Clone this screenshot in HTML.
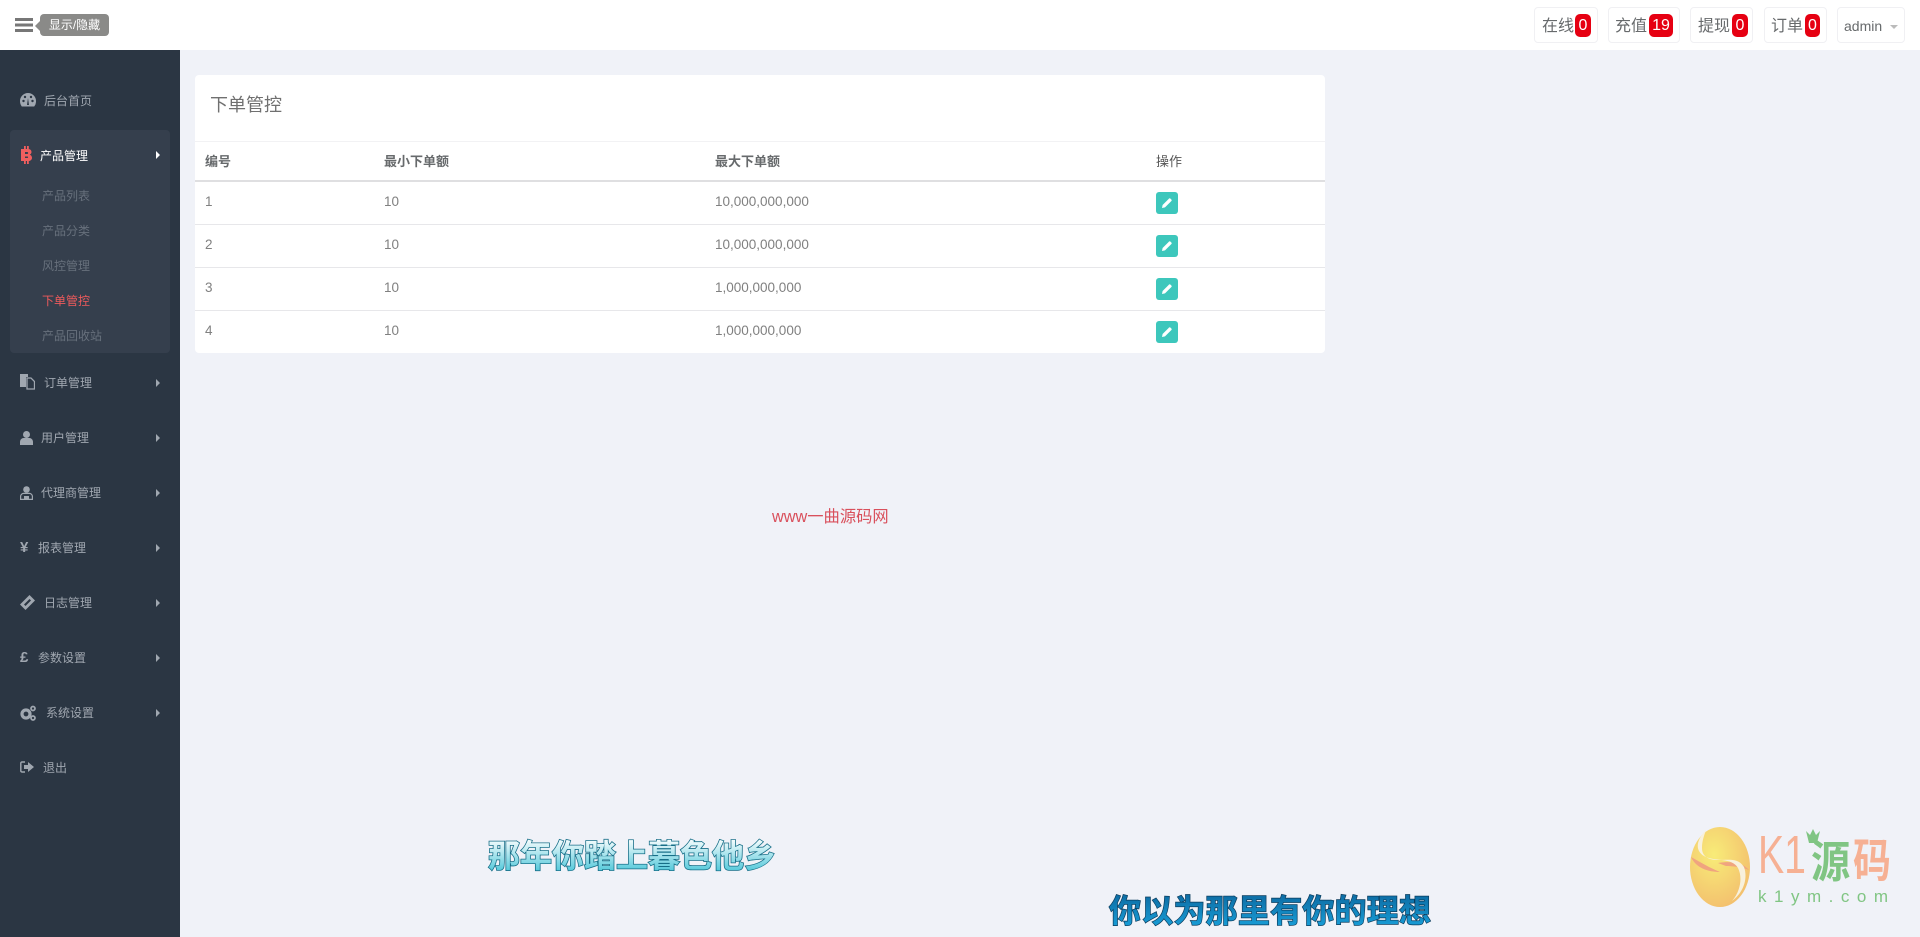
<!DOCTYPE html>
<html lang="zh">
<head>
<meta charset="utf-8">
<title>下单管控</title>
<style>
html,body{margin:0;padding:0;width:1920px;height:937px;overflow:hidden;background:#f0f2f8;font-family:"Liberation Sans","Noto Sans CJK SC",sans-serif;color:#676a6c}
*{box-sizing:border-box}
.a{position:absolute;white-space:nowrap}
#top{position:absolute;left:0;top:0;width:1920px;height:50px;background:#fff}
#side{position:absolute;left:0;top:50px;width:180px;height:887px;background:#2b3643}
#sub{position:absolute;left:10px;top:130px;width:160px;height:223px;background:#353f4d;border-radius:4px}
.m{font-size:12px;line-height:16px;color:#a0a7b0}
.s{font-size:12px;line-height:16px;color:#67707c;left:42px}
.ar{position:absolute;left:156px;width:0;height:0;border-left:4px solid #a0a7b0;border-top:4px solid transparent;border-bottom:4px solid transparent}
.box{position:absolute;top:7px;height:36px;background:#fff;border:1px solid #f0f0f3;border-radius:4px;font-size:16px;line-height:36px;color:#676a6c;white-space:nowrap}
.bd{position:absolute;top:6px;height:23px;background:#e60012;color:#fff;border-radius:5px;font-size:16px;line-height:23px;text-align:center}
.lb{position:absolute;left:6px;top:1px}
#card{position:absolute;left:195px;top:75px;width:1130px;height:278px;background:#fff;border-radius:4px}
.ln{position:absolute;left:0;width:1130px;height:1px;background:#e7e7ea}
.th{font-size:13px;font-weight:bold;line-height:16px;color:#676a6c}
.td{font-size:13.5px;line-height:16px;color:#808080}
.btn{position:absolute;left:961px;width:22px;height:22px;background:#3dc7bc;border-radius:3px}
.btn svg{position:absolute;left:5px;top:5px}
</style>
</head>
<body>
<div id="top">
<svg class="a" style="left:15px;top:18px" width="18" height="14" viewBox="0 0 18 14"><path d="M0 0h18v3H0zM0 5.500h18v3H0zM0 11h18v3H0z" fill="#777"/></svg>
<div class="a" style="left:35px;top:21px;width:0;height:0;border-right:5px solid #8a8a88;border-top:5px solid transparent;border-bottom:5px solid transparent"></div>
<div class="a" style="left:40px;top:14px;width:69px;height:22px;background:#8a8a88;border-radius:4px;color:#fff;font-size:12px;line-height:23px;text-align:center">显示/隐藏</div>
<div class="box" style="left:1534px;width:64px"><span class="lb" style="left:7px">在线</span><span class="bd" style="left:40px;width:16px">0</span></div>
<div class="box" style="left:1608px;width:72px"><span class="lb">充值</span><span class="bd" style="left:40px;width:24px">19</span></div>
<div class="box" style="left:1690px;width:63px"><span class="lb" style="left:7px">提现</span><span class="bd" style="left:41px;width:16px">0</span></div>
<div class="box" style="left:1764px;width:63px"><span class="lb">订单</span><span class="bd" style="left:40px;width:15px">0</span></div>
<div class="box" style="left:1837px;width:68px;font-size:14px"><span class="lb" style="top:0">admin</span><span class="a" style="left:52px;top:17px;width:0;height:0;border-top:4px solid #bbb;border-left:4px solid transparent;border-right:4px solid transparent"></span></div>
</div>

<div id="side"></div>
<div id="sub"></div>

<svg class="a" style="left:20px;top:93px" width="16" height="14" viewBox="0 0 16 14"><path d="M8 0a8 8 0 0 0-8 8c0 2 .6 4 1.800 5.500h12.400A8 8 0 0 0 16 8a8 8 0 0 0-8-8z" fill="#a0a7b0"/><circle cx="3.500" cy="8" r="1.200" fill="#2b3643"/><circle cx="5" cy="4" r="1.200" fill="#2b3643"/><circle cx="11" cy="4" r="1.200" fill="#2b3643"/><circle cx="12.500" cy="8" r="1.200" fill="#2b3643"/><path d="M7 12l1-7 1 7z" fill="#2b3643"/></svg>
<div class="a m" style="left:44px;top:93px">后台首页</div>

<svg class="a" style="left:20px;top:146px" width="12" height="18" viewBox="0 0 12 18"><path d="M1 3h7c2.500 0 3.500 1.500 3.500 3 0 1.300-.7 2.300-1.800 2.700 1.400.4 2.300 1.500 2.300 3 0 2-1.500 3.300-3.800 3.300H1zM5 6v2h2.200a1 1 0 0 0 0-2zM5 10.500V12h2.700a.9.9 0 0 0 0-1.500z" fill="#ef5f5f" fill-rule="evenodd"/><path d="M4 0h1.800v3H4zM7 0h1.800v3H7zM4 15h1.800v3H4zM7 15h1.800v3H7z" fill="#ef5f5f"/></svg>
<div class="a m" style="left:40px;top:148px;color:#fff">产品管理</div>
<div class="ar" style="top:151px;border-left-color:#fff"></div>

<div class="a s" style="top:188px">产品列表</div>
<div class="a s" style="top:223px">产品分类</div>
<div class="a s" style="top:258px">风控管理</div>
<div class="a s" style="top:293px;color:#ee5a5c">下单管控</div>
<div class="a s" style="top:328px">产品回收站</div>

<svg class="a" style="left:20px;top:374px" width="15" height="16" viewBox="0 0 15 16"><path d="M0 0h8v3H6v10H0z" fill="#a0a7b0"/><path d="M7 4h4l3.500 3.500V15H7z" fill="none" stroke="#a0a7b0" stroke-width="1.300"/></svg>
<div class="a m" style="left:44px;top:375px">订单管理</div>
<div class="ar" style="top:379px"></div>

<svg class="a" style="left:20px;top:431px" width="13" height="14" viewBox="0 0 13 14"><circle cx="6.500" cy="3.500" r="3.500" fill="#a0a7b0"/><path d="M0 14v-3c0-2.500 2-4 3.500-4h6c1.500 0 3.500 1.500 3.500 4v3z" fill="#a0a7b0"/></svg>
<div class="a m" style="left:41px;top:430px">用户管理</div>
<div class="ar" style="top:434px"></div>

<svg class="a" style="left:20px;top:486px" width="13" height="14" viewBox="0 0 13 14"><circle cx="6.500" cy="3.500" r="3.300" fill="#a0a7b0"/><path d="M.6 13.400v-3c0-2 1.800-3 3-3h5.800c1.200 0 3 1 3 3v3z" fill="none" stroke="#a0a7b0" stroke-width="1.200"/><path d="M4 10h5v3H4z" fill="#a0a7b0"/></svg>
<div class="a m" style="left:41px;top:485px">代理商管理</div>
<div class="ar" style="top:489px"></div>

<div class="a" style="left:20px;top:539px;font-size:15px;line-height:18px;font-weight:bold;color:#a0a7b0">¥</div>
<div class="a m" style="left:38px;top:540px">报表管理</div>
<div class="ar" style="top:544px"></div>

<svg class="a" style="left:20px;top:595px" width="15" height="15" viewBox="0 0 15 15"><path d="M0 9.500L9.500 0 15 5.500 5.500 15z" fill="#a0a7b0"/><path d="M4 9.500L9.500 4 11 5.500 5.500 11z" fill="#2b3643"/></svg>
<div class="a m" style="left:44px;top:595px">日志管理</div>
<div class="ar" style="top:599px"></div>

<div class="a" style="left:20px;top:649px;font-size:15px;line-height:18px;font-weight:bold;color:#a0a7b0">£</div>
<div class="a m" style="left:38px;top:650px">参数设置</div>
<div class="ar" style="top:654px"></div>

<svg class="a" style="left:20px;top:705px" width="16" height="16" viewBox="0 0 16 16"><circle cx="6" cy="9" r="4" fill="none" stroke="#a0a7b0" stroke-width="3.200"/><circle cx="13" cy="3.500" r="2" fill="none" stroke="#a0a7b0" stroke-width="1.700"/><circle cx="13" cy="13" r="2" fill="none" stroke="#a0a7b0" stroke-width="1.700"/></svg>
<div class="a m" style="left:46px;top:705px">系统设置</div>
<div class="ar" style="top:709px"></div>

<svg class="a" style="left:20px;top:761px" width="14" height="12" viewBox="0 0 14 12"><path d="M5 1H2a1.200 1.200 0 0 0-1.200 1.200v7.600A1.200 1.200 0 0 0 2 11h3" fill="none" stroke="#a0a7b0" stroke-width="1.400"/><path d="M4 4h4V1l6 5-6 5V8H4z" fill="#a0a7b0"/></svg>
<div class="a m" style="left:43px;top:760px">退出</div>

<div id="card">
<div class="a" style="left:15px;top:18px;font-size:18px;line-height:24px;color:#707070">下单管控</div>
<div class="ln" style="top:66px;background:#f2f2f4"></div>
<div class="ln" style="top:105px;height:2px;background:#dfdfe1"></div>
<div class="ln" style="top:149px"></div>
<div class="ln" style="top:192px"></div>
<div class="ln" style="top:235px"></div>

<div class="a th" style="left:10px;top:79px">编号</div>
<div class="a th" style="left:189px;top:79px">最小下单额</div>
<div class="a th" style="left:520px;top:79px">最大下单额</div>
<div class="a th" style="left:961px;top:79px;font-weight:normal;color:#555">操作</div>

<div class="a td" style="left:10px;top:119px">1</div><div class="a td" style="left:189px;top:119px">10</div><div class="a td" style="left:520px;top:119px">10,000,000,000</div>
<div class="btn" style="top:117px"><svg width="12" height="12" viewBox="0 0 12 12"><path d="M1 11l.6-3L8 1.600a1 1 0 0 1 1.400 0l1 1a1 1 0 0 1 0 1.400L4 10.400z" fill="#fff"/></svg></div>

<div class="a td" style="left:10px;top:162px">2</div><div class="a td" style="left:189px;top:162px">10</div><div class="a td" style="left:520px;top:162px">10,000,000,000</div>
<div class="btn" style="top:160px"><svg width="12" height="12" viewBox="0 0 12 12"><path d="M1 11l.6-3L8 1.600a1 1 0 0 1 1.400 0l1 1a1 1 0 0 1 0 1.400L4 10.400z" fill="#fff"/></svg></div>

<div class="a td" style="left:10px;top:205px">3</div><div class="a td" style="left:189px;top:205px">10</div><div class="a td" style="left:520px;top:205px">1,000,000,000</div>
<div class="btn" style="top:203px"><svg width="12" height="12" viewBox="0 0 12 12"><path d="M1 11l.6-3L8 1.600a1 1 0 0 1 1.400 0l1 1a1 1 0 0 1 0 1.400L4 10.400z" fill="#fff"/></svg></div>

<div class="a td" style="left:10px;top:248px">4</div><div class="a td" style="left:189px;top:248px">10</div><div class="a td" style="left:520px;top:248px">1,000,000,000</div>
<div class="btn" style="top:246px"><svg width="12" height="12" viewBox="0 0 12 12"><path d="M1 11l.6-3L8 1.600a1 1 0 0 1 1.400 0l1 1a1 1 0 0 1 0 1.400L4 10.400z" fill="#fff"/></svg></div>
</div>

<div class="a" style="left:772px;top:507px;font-size:16.300px;line-height:20px;color:#d9505c">www一曲源码网</div>

<svg class="a" style="left:480px;top:831px" width="300" height="50" viewBox="0 0 300 50">
<defs><linearGradient id="g1" x1="0" y1="0" x2="0" y2="1"><stop offset=".15" stop-color="#ffffff"/><stop offset="1" stop-color="#35bfd4"/></linearGradient>
<linearGradient id="g2" x1="0" y1="0" x2="0" y2="1"><stop offset="0" stop-color="#0a5f96"/><stop offset="1" stop-color="#1aa5df"/></linearGradient></defs>
<text x="8" y="36" font-size="32" font-weight="bold" font-family="'Noto Sans CJK SC',sans-serif" fill="url(#g1)" stroke="#176f88" stroke-width="1.600" paint-order="stroke" textLength="288" lengthAdjust="spacing">那年你踏上暮色他乡</text>
</svg>
<svg class="a" style="left:1100px;top:886px" width="340" height="50" viewBox="0 0 340 50">
<text x="9" y="36" font-size="32" font-weight="bold" font-family="'Noto Sans CJK SC',sans-serif" fill="url(#g2)" stroke="#0a3b5c" stroke-width="1.400" paint-order="stroke" textLength="322" lengthAdjust="spacing">你以为那里有你的理想</text>
</svg>

<svg class="a" style="left:1670px;top:810px" width="250" height="127" viewBox="0 0 250 127">
<defs><radialGradient id="eg" cx=".4" cy=".35" r=".7"><stop offset="0" stop-color="#f8ec78"/><stop offset="1" stop-color="#f3bf6e"/></radialGradient></defs>
<ellipse cx="50" cy="57" rx="30" ry="40" fill="url(#eg)"/>
<path d="M21 47C26 58 38 62 50 62 40 58 30 52 21 47zM48 53C60 51 72 52 79 60 72 57 62 56 56 56z" fill="#f0a47f"/>
<path d="M36 20C27 29 24 40 34 46 44 52 62 47 68 58 73 68 70 82 62 91 74 82 78 68 74 57 68 48 60 50 48 50 38 50 32 46 32 38 32 31 34 26 36 20z" fill="#f8f1dc"/>
<text x="88" y="63" font-size="54" font-family="'Liberation Sans',sans-serif" fill="#f6b093" textLength="48" lengthAdjust="spacingAndGlyphs">K1</text>
<text x="0" y="0" transform="translate(141 67) scale(.98 1.100)" font-size="40" font-weight="bold" font-family="'Noto Sans CJK SC',sans-serif" fill="#80c583">源</text>
<text x="0" y="0" transform="translate(183 67) scale(.95 1.150)" font-size="40" font-weight="bold" font-family="'Noto Sans CJK SC',sans-serif" fill="#f6b093">码</text>
<path d="M139 33l-3-12 4 4 3-6 3 6 4-4-3 12z" fill="#80c583"/>
<text x="88" y="92" font-size="17" font-family="'Liberation Sans',sans-serif" fill="#80c583" textLength="130" lengthAdjust="spacing">k1ym.com</text>
</svg>
</body>
</html>
